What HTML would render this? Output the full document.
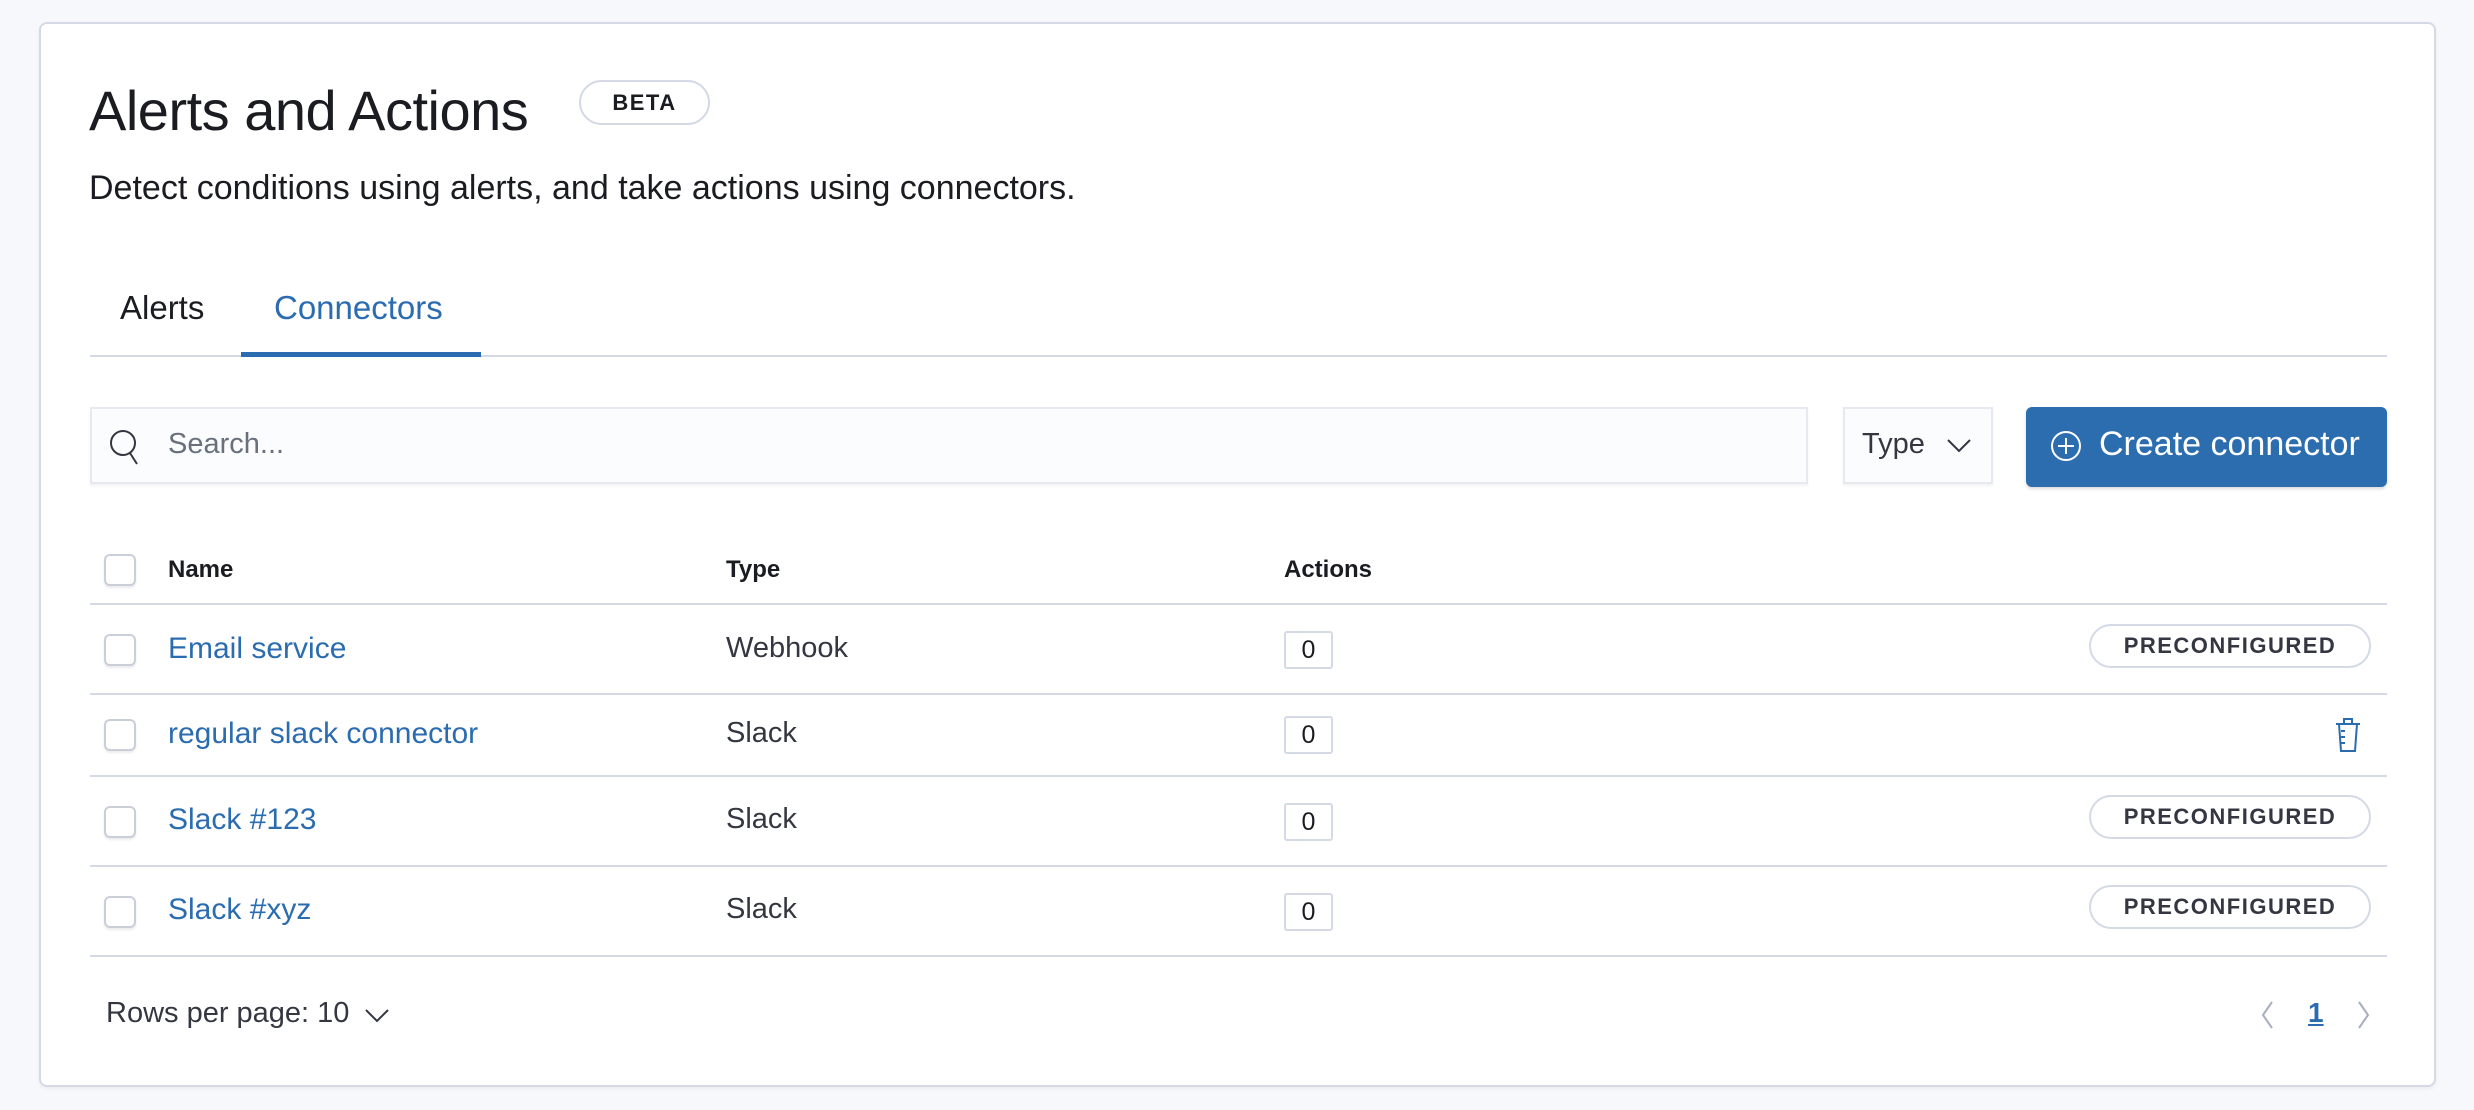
<!DOCTYPE html>
<html><head><meta charset="utf-8"><style>
*{box-sizing:border-box;margin:0;padding:0}
body{width:2474px;height:1110px;background:#f7f8fc;font-family:"Liberation Sans",sans-serif;color:#343741;position:relative;overflow:hidden}
.a{position:absolute;white-space:nowrap}
.panel{position:absolute;left:39px;top:22px;width:2397px;height:1065px;background:#fff;border:2px solid #d3dae6;border-radius:8px;box-shadow:0 2px 4px rgba(0,0,0,.05)}
.cb{position:absolute;left:104px;width:32px;height:32px;border:2px solid #c9cfd9;border-radius:6px;background:#fff;box-shadow:0 2px 2px rgba(0,0,0,.08)}
.line{position:absolute;left:90px;width:2297px;height:2px;background:#d3dae6}
.lnk{color:#2b6cb0;font-size:30px}
.txt{font-size:29px;color:#343741}
.cnt{position:absolute;left:1284px;width:49px;height:38px;border:2px solid #d3dae6;border-radius:3px;font-size:25px;text-align:center;line-height:34px;color:#1a1c21}
.pre{position:absolute;left:2089px;width:282px;height:44px;border:2px solid #d3dae6;border-radius:22px;font-size:22px;font-weight:bold;letter-spacing:1.5px;text-align:center;line-height:40px;color:#343741}
</style></head><body>
<div class="panel"></div>
<div class="a" style="left:89px;top:78px;font-size:56px;color:#1a1c21;letter-spacing:-0.5px">Alerts and Actions</div>
<div class="a" style="left:579px;top:80px;width:131px;height:45px;border:2px solid #d3dae6;border-radius:23px;font-size:22px;font-weight:bold;text-align:center;line-height:41px;letter-spacing:1.5px;color:#1a1c21">BETA</div>
<div class="a" style="left:89px;top:169px;font-size:34px;color:#1a1c21">Detect conditions using alerts, and take actions using connectors.</div>
<div class="a" style="left:120px;top:289px;font-size:33px;color:#1a1c21">Alerts</div>
<div class="a" style="left:274px;top:289px;font-size:33px;color:#2b6cb0">Connectors</div>
<div class="line" style="top:355px"></div>
<div class="a" style="left:241px;top:352px;width:240px;height:5px;background:#2b6cb0"></div>
<div class="a" style="left:90px;top:407px;width:1718px;height:77px;background:#fbfcfd;border:2px solid #e6e9f0;box-shadow:0 2px 2px rgba(0,0,0,.05)"></div>
<svg class="a" style="left:108px;top:428px" width="34" height="38" viewBox="0 0 34 38"><circle cx="15" cy="15" r="12" fill="none" stroke="#343741" stroke-width="2"/><path d="M22 25 L29 36" stroke="#343741" stroke-width="2"/></svg>
<div class="a" style="left:168px;top:428px;font-size:29px;color:#69707d">Search...</div>
<div class="a" style="left:1843px;top:407px;width:150px;height:77px;background:#fbfcfd;border:2px solid #e6e9f0;box-shadow:0 2px 2px rgba(0,0,0,.05)"></div>
<div class="a" style="left:1862px;top:428px;font-size:29px;color:#343741">Type</div>
<svg class="a" style="left:1946px;top:437px" width="26" height="16"><path d="M2 3 L13 14 L24 3" fill="none" stroke="#343741" stroke-width="2"/></svg>
<div class="a" style="left:2026px;top:407px;width:361px;height:80px;background:#2c6db0;border-radius:6px;box-shadow:0 2px 3px rgba(0,0,0,.15)"></div>
<svg class="a" style="left:2049px;top:429px" width="34" height="34"><circle cx="17" cy="17" r="14" fill="none" stroke="#fff" stroke-width="2"/><path d="M17 9V25M9 17H25" stroke="#fff" stroke-width="2"/></svg>
<div class="a" style="left:2099px;top:425px;font-size:34px;color:#fff">Create connector</div>
<div class="cb" style="top:554px"></div>
<div class="a" style="left:168px;top:556px;font-size:24px;font-weight:bold;color:#1a1c21">Name</div>
<div class="a" style="left:726px;top:556px;font-size:24px;font-weight:bold;color:#1a1c21">Type</div>
<div class="a" style="left:1284px;top:556px;font-size:24px;font-weight:bold;color:#1a1c21">Actions</div>
<div class="line" style="top:603px"></div>
<div class="line" style="top:693px"></div>
<div class="line" style="top:775px"></div>
<div class="line" style="top:865px"></div>
<div class="line" style="top:955px"></div>
<div class="cb" style="top:634px"></div><div class="a lnk" style="left:168px;top:632px">Email service</div><div class="a txt" style="left:726px;top:632px">Webhook</div><div class="cnt" style="top:631px">0</div><div class="pre" style="top:624px">PRECONFIGURED</div>
<div class="cb" style="top:719px"></div><div class="a lnk" style="left:168px;top:717px">regular slack connector</div><div class="a txt" style="left:726px;top:717px">Slack</div><div class="cnt" style="top:716px">0</div>
<svg class="a" style="left:2332px;top:717px" width="32" height="36" viewBox="0 0 32 36"><path d="M12 6V2H20V6M4 7H28M7 7L9 34H23L25 7M9 14H13M9 20H13M9 26H13" fill="none" stroke="#2b6cb0" stroke-width="2"/></svg>
<div class="cb" style="top:806px"></div><div class="a lnk" style="left:168px;top:803px">Slack #123</div><div class="a txt" style="left:726px;top:803px">Slack</div><div class="cnt" style="top:803px">0</div><div class="pre" style="top:795px">PRECONFIGURED</div>
<div class="cb" style="top:896px"></div><div class="a lnk" style="left:168px;top:893px">Slack #xyz</div><div class="a txt" style="left:726px;top:893px">Slack</div><div class="cnt" style="top:893px">0</div><div class="pre" style="top:885px">PRECONFIGURED</div>
<div class="a" style="left:106px;top:997px;font-size:29px;color:#343741">Rows per page: 10</div>
<svg class="a" style="left:364px;top:1007px" width="26" height="16"><path d="M2 3 L13 14 L24 3" fill="none" stroke="#343741" stroke-width="2"/></svg>
<svg class="a" style="left:2259px;top:1000px" width="16" height="30"><path d="M13 2 L4 15 L13 28" fill="none" stroke="#a7afbe" stroke-width="2"/></svg>
<div class="a" style="left:2308px;top:997px;font-size:28px;font-weight:bold;color:#2b6cb0;text-decoration:underline">1</div>
<svg class="a" style="left:2356px;top:1000px" width="16" height="30"><path d="M3 2 L12 15 L3 28" fill="none" stroke="#a7afbe" stroke-width="2"/></svg>
</body></html>
